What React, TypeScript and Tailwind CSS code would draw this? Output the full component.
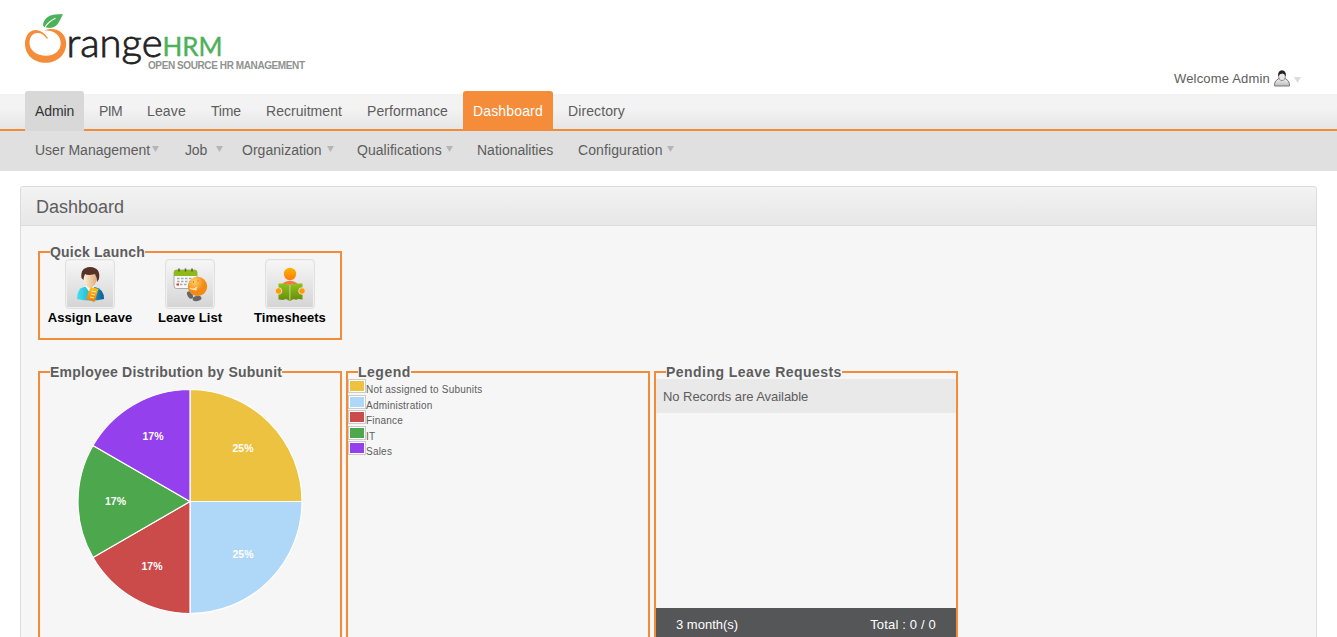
import type { ReactNode } from "react";

const tabs = [
  { label: "Admin", cls: "w-[59px] rounded-t-[3px] bg-[#d8d8d8] text-[#333] h-[40px] tracking-[-0.1px]" },
  { label: "PIM", cls: "w-[43px] h-[38px] tracking-[-0.6px]" },
  { label: "Leave", cls: "w-[59px] h-[38px] tracking-[0.15px]" },
  { label: "Time", cls: "w-[50px] h-[38px] tracking-[-0.2px]" },
  { label: "Recruitment", cls: "w-[96px] h-[38px] tracking-[0.04px]" },
  { label: "Performance", cls: "w-[101px] h-[38px] tracking-[0.06px]" },
  { label: "Dashboard", cls: "w-[90px] rounded-t-[3px] bg-[#f48c39] text-white h-[38px] tracking-[0.15px]" },
  { label: "Directory", cls: "w-[77px] h-[38px] tracking-[0.1px]" },
];

const subItems = [
  { label: "User Management", cls: "w-[150px]", arrow: "ml-[2px]" },
  { label: "Job", cls: "w-[57px] tracking-[-0.2px]", arrow: "ml-[9px]" },
  { label: "Organization", cls: "w-[115px] tracking-[0.02px]", arrow: "ml-[5px]" },
  { label: "Qualifications", cls: "w-[120px] tracking-[0.05px]", arrow: "ml-[4px]" },
  { label: "Nationalities", cls: "w-[101px]", arrow: "" },
  { label: "Configuration", cls: "w-[110px] tracking-[0.1px]", arrow: "ml-[4px]" },
];

const legend = [
  { label: "Not assigned to Subunits", row: "h-[16px]", color: "bg-[#edc240]" },
  { label: "Administration", row: "h-[15px]", color: "bg-[#afd8f8]" },
  { label: "Finance", row: "h-[16px]", color: "bg-[#cb4b4b]" },
  { label: "IT", row: "h-[15px]", color: "bg-[#4da74d]" },
  { label: "Sales", row: "h-[15px]", color: "bg-[#9440ed]" },
];

const slices = [
  { d: "M112 112V0A112 112 0 0 1 224 112Z", fill: "#edc240", label: "25%", x: 165, y: 62.5 },
  { d: "M112 112H224A112 112 0 0 1 112 224Z", fill: "#afd8f8", label: "25%", x: 165, y: 168.5 },
  { d: "M112 112V224A112 112 0 0 1 15 168Z", fill: "#cb4b4b", label: "17%", x: 74, y: 180.5 },
  { d: "M112 112L15 168A112 112 0 0 1 15 56Z", fill: "#4da74d", label: "17%", x: 37.5, y: 115.5 },
  { d: "M112 112L15 56A112 112 0 0 1 112 0Z", fill: "#9440ed", label: "17%", x: 75, y: 50.5 },
];

function Logo() {
  return (
    <svg width="290" height="66" viewBox="20 10 290 66" className="ml-5 block overflow-visible">
      <path d="M43 25.500C43.500 19 48.500 15.300 55 14.600Q60 14.300 63 13.900Q61.500 17 59.500 21C57 26.500 52 29 46.500 27.600Q43.500 27.500 43 25.500Z" fill="#4db159" />
      <path d="M44.500 28C47 23.500 50.500 20.500 55.500 18.200" fill="none" stroke="#fff" strokeWidth="1.100" />
      <path
        d="M48 38.200C43.500 31.500 37.500 28.800 32.500 30.600C27.500 32.500 25 38.500 25 43.800C25 55 34 62.800 45.500 62.800C57.500 62.800 66.200 54.500 66.200 43.500C66.200 34.500 59.500 28.900 51.500 28.900C48.500 28.900 46 29.500 44.500 30.700C52 29.800 60.700 34 60.700 43.300C60.700 51 54 55.800 46 55.800C37 55.800 29.500 50.500 29.500 43C29.500 37 32.500 33.300 37 33C41.500 32.800 43.500 34.800 46 37.800Q47.300 39.300 48 38.200Z"
        fill="#f48c39"
      />
      <text x="66.500" y="56.500" fontFamily="Lato, sans-serif" fontSize="40" fontWeight="300" fill="#222" stroke="#222" strokeWidth=".8" textLength="96" lengthAdjust="spacingAndGlyphs">range</text>
      <text x="162.500" y="56.300" fontFamily="Lato, sans-serif" fontSize="26.500" fontWeight="400" fill="#4db159" stroke="#4db159" strokeWidth=".4" textLength="60" lengthAdjust="spacingAndGlyphs">HRM</text>
      <text x="148" y="68.600" fontFamily="Liberation Sans, sans-serif" fontSize="10" fontWeight="700" fill="#8f9390" textLength="157" lengthAdjust="spacing">OPEN SOURCE HR MANAGEMENT</text>
    </svg>
  );
}

function Arrow({ className }: { className: string }) {
  return (
    <svg width="7" height="6" viewBox="0 0 7 6" className={className}>
      <path d="M0 0H7L3.500 6Z" fill="currentColor" />
    </svg>
  );
}

function UserIcon() {
  return (
    <svg width="16" height="17" viewBox="0 0 16 17" className="-mt-px ml-1">
      <defs>
        <linearGradient id="user" x1="0" y1="0" x2="0" y2="1">
          <stop offset="0" stopColor="#f5f5f5" />
          <stop offset="1" stopColor="#bdbdbd" />
        </linearGradient>
      </defs>
      <path d="M.6 16V13.500Q.8 11 4 9L6 8H10L12 9Q15.200 11 15.400 13.500V16Z" fill="url(#user)" stroke="#777" />
      <ellipse cx="8" cy="6" rx="3.300" ry="4.500" fill="#e8e8e8" stroke="#777" strokeWidth=".8" />
      <path d="M4.200 6.500Q3.600 .5 8 .3Q12.400 .5 11.800 6.500Q11 4 8.500 3.500Q5.500 3.700 4.200 6.500Z" fill="#222" />
    </svg>
  );
}

function AssignIcon() {
  return (
    <svg width="48" height="48" viewBox="0 0 48 48">
      <defs>
        <linearGradient id="shirt">
          <stop offset="0" stopColor="#43e1f0" />
          <stop offset=".45" stopColor="#29b8d8" />
          <stop offset="1" stopColor="#095a94" />
        </linearGradient>
        <linearGradient id="face">
          <stop offset="0" stopColor="#fff0db" />
          <stop offset="1" stopColor="#dfa976" />
        </linearGradient>
        <linearGradient id="note" x1="0" y1="0" x2="0" y2="1">
          <stop offset="0" stopColor="#ffc21d" />
          <stop offset="1" stopColor="#ed7909" />
        </linearGradient>
      </defs>
      <path d="M11 39Q11 28.500 18 27H29Q38 29 38 39Q25 42 11 39Z" fill="url(#shirt)" />
      <path d="M19 26L24 33L29 26Z" fill="#f8f8f8" />
      <path d="M17.500 14Q18 9 24 9Q31 9 31 16Q31 23 27.500 26Q24 30 20.500 26Q17 22 17.500 14Z" fill="url(#face)" />
      <path d="M15.500 18Q14 7.500 24 7Q35 7.500 33 19L31 22Q31 17 29 14Q22 16 19 14Q17.500 17 17.500 20Z" fill="#563329" />
      <path d="M24.500 27L32.500 29L28.500 42L20 39Z" fill="url(#note)" />
      <path d="M25.500 31L30 32M25 34L29 35M24 37L28 38" stroke="#fff1b8" strokeWidth=".9" />
    </svg>
  );
}

function LeaveIcon() {
  return (
    <svg width="48" height="48" viewBox="0 0 48 48">
      <defs>
        <radialGradient id="ball" cx=".35" cy=".25">
          <stop offset="0" stopColor="#ffd06a" />
          <stop offset="1" stopColor="#f28a15" />
        </radialGradient>
      </defs>
      <rect x="8" y="10" width="23" height="18.500" rx="2.500" fill="#f8f8f8" stroke="#999" strokeWidth=".8" />
      <path d="M8 16V12Q8 10 10 10H29Q31 10 31 12V16Z" fill="#8fb819" />
      <path d="M13 8.500V11.500M19.500 8.500V11.500M26 8.500V11.500" stroke="#56622a" strokeWidth="1.500" />
      <path d="M11 18.500H29M11 21.500H28M14 24.500H26" stroke="#aaa" strokeWidth="1.500" strokeDasharray="2.500 1.500" />
      <path d="M10.500 24.500H13" stroke="#d43d22" strokeWidth="2" />
      <ellipse cx="24" cy="35" rx="2.500" ry="4" fill="#666" transform="rotate(-30 24 35)" />
      <ellipse cx="31" cy="38.500" rx="4.500" ry="2.500" fill="#666" transform="rotate(-10 31 38.500)" />
      <circle cx="31.500" cy="26.500" r="9.700" fill="url(#ball)" />
      <path d="M24 28Q28 31 31 27M28 29L30.500 30" stroke="#ffe6ab" strokeWidth="1.500" fill="none" />
      <path d="M27.500 21V23M32 20V22" stroke="#e08a20" />
    </svg>
  );
}

function TimesheetIcon() {
  return (
    <svg width="48" height="48" viewBox="0 0 48 48">
      <defs>
        <linearGradient id="head" x1="0" y1="0" x2="0" y2="1">
          <stop offset="0" stopColor="#ffb400" />
          <stop offset="1" stopColor="#ff7b0d" />
        </linearGradient>
        <linearGradient id="book" x1="0" y1="0" x2="0" y2="1">
          <stop offset="0" stopColor="#8fc31f" />
          <stop offset="1" stopColor="#678a08" />
        </linearGradient>
      </defs>
      <circle cx="24" cy="14" r="6.200" fill="url(#head)" />
      <path d="M16 23.500Q24 18 32 23.500L24 25Z" fill="#f7783e" />
      <path d="M12.500 23.500Q20 23 23.800 25Q28 23 36.500 23.500V39.500L32 39L30 40L28 39L23.800 41L20 39L17 40L12.500 39.500Z" fill="url(#book)" />
      <path d="M23.900 25V40.500" stroke="#d5e7a9" strokeWidth=".8" />
      <circle cx="12.500" cy="31" r="3.300" fill="#ff9a08" stroke="#ededed" strokeWidth=".8" />
      <circle cx="36" cy="31" r="3.300" fill="#ff9a08" stroke="#ededed" strokeWidth=".8" />
    </svg>
  );
}

function Shortcut({ label, children }: { label: string; children: ReactNode }) {
  return (
    <a className="flex w-[100px] flex-col items-center">
      <span className="flex size-[50px] items-center justify-center rounded-[4px] border border-[#e0e0dc] bg-linear-to-b from-[#f7f7f7] to-[#d4d4d4] shadow-[inset_0_0_0_1px_#f0f0f0]">
        {children}
      </span>
      <span className="text-[13px] leading-[17px] font-bold tracking-[0.05px] whitespace-nowrap text-black">{label}</span>
    </a>
  );
}

function Group({ title, className, titleClass, children }: { title: string; className: string; titleClass: string; children: ReactNode }) {
  return (
    <fieldset className={`w-[304px] min-w-0 shrink-0 border-2 border-[#f28c38] ${className}`}>
      <legend className={`relative z-10 ml-[10px] h-[15px] text-[14px] leading-[17px] font-bold whitespace-nowrap text-[#5d5d5d] ${titleClass}`}>{title}</legend>
      {children}
    </fieldset>
  );
}

export default function App() {
  return (
    <div className="h-[637px] overflow-hidden bg-white font-['Liberation_Sans',Arial,sans-serif] text-[#5d5d5d]">
      <header className="flex h-[94px] items-start justify-between pt-[10px]">
        <Logo />
        <div className="mt-[60px] mr-[36px] flex h-[18px] items-center text-[13px] tracking-[0.18px]">
          <span>Welcome Admin</span>
          <UserIcon />
          <Arrow className="mt-[2px] ml-[4px] text-[#dcdcdc]" />
        </div>
      </header>

      <nav className="h-[37px] border-b-2 border-[#f28c38] bg-linear-to-b from-[#f3f3f3] from-40% to-[#e6e6e6]">
        <ul className="flex gap-[5px] pl-[25px] text-[14px]">
          {tabs.map((t) => (
            <li key={t.label} className={`-mt-[3px] shrink-0 pl-[10px] leading-[40px] whitespace-nowrap ${t.cls}`}>
              {t.label}
            </li>
          ))}
        </ul>
      </nav>

      <ul className="flex h-[40px] bg-[#e0e0e0] pl-[35px] text-[14px] leading-[38px]">
        {subItems.map((s) => (
          <li key={s.label} className={`flex shrink-0 whitespace-nowrap ${s.cls}`}>
            {s.label}
            {s.arrow && <Arrow className={`mt-[15px] shrink-0 text-[#b5b5b5] ${s.arrow}`} />}
          </li>
        ))}
      </ul>

      <main className="mx-[20px] mt-[15px] h-[500px] rounded-t-[3px] border border-[#dcdcdc] bg-[#f6f6f6]">
        <h1 className="h-[39px] rounded-t-[2px] border-b border-[#dcdcdc] bg-linear-to-b from-[#f3f3f3] to-[#e7e7e7] pl-[15px] text-[18px] leading-[41px]">Dashboard</h1>
        <div className="pt-[18px] pl-[17px]">
          <Group title="Quick Launch" className="h-[96px]" titleClass="tracking-[0.2px]">
            <div className="flex">
              <Shortcut label="Assign Leave"><AssignIcon /></Shortcut>
              <Shortcut label="Leave List"><LeaveIcon /></Shortcut>
              <Shortcut label="Timesheets"><TimesheetIcon /></Shortcut>
            </div>
          </Group>

          <div className="mt-[24px] flex gap-[4px]">
            <Group title="Employee Distribution by Subunit" className="h-[320px]" titleClass="tracking-[0.23px]">
              <svg width="226" height="226" viewBox="-1 -1.5 226 226" className="mt-[9px] ml-[37px]">
                {slices.map((s) => (
                  <path key={s.d} d={s.d} fill={s.fill} stroke="#fff" strokeWidth="1.200" />
                ))}
                {slices.map((s) => (
                  <text key={s.d} x={s.x} y={s.y} textAnchor="middle" fontFamily="Liberation Sans" fontSize="10.500" fontWeight="700" fill="#fff">{s.label}</text>
                ))}
              </svg>
            </Group>

            <Group title="Legend" className="h-[320px]" titleClass="tracking-[0.5px]">
              <ul className="text-[10px] tracking-[0.22px]">
                {legend.map((l) => (
                  <li key={l.label} className={`flex ${l.row}`}>
                    <span className="h-[14px] w-[18px] border border-[#ccc] bg-white p-px">
                      <span className={`block h-[10px] w-[14px] ${l.color}`} />
                    </span>
                    <span className="pt-[3px] leading-[16px] whitespace-nowrap">{l.label}</span>
                  </li>
                ))}
              </ul>
            </Group>

            <Group title="Pending Leave Requests" className="h-[320px]" titleClass="tracking-[0.46px]">
              <div className="flex h-full flex-col">
                <div className="h-[34px] shrink-0 bg-[#e9e9e9] pl-[7px] text-[13px] leading-[35px] tracking-[-0.05px]">No Records are Available</div>
                <div className="h-[195px] shrink-0" />
                <div className="flex h-[40px] shrink-0 justify-between bg-[#555658] pr-[20px] pl-[20px] text-[13px] leading-[33px] text-white">
                  <span>3 month(s)</span>
                  <span className="tracking-[0.17px]">Total : 0 / 0</span>
                </div>
              </div>
            </Group>
          </div>
        </div>
      </main>
    </div>
  );
}
